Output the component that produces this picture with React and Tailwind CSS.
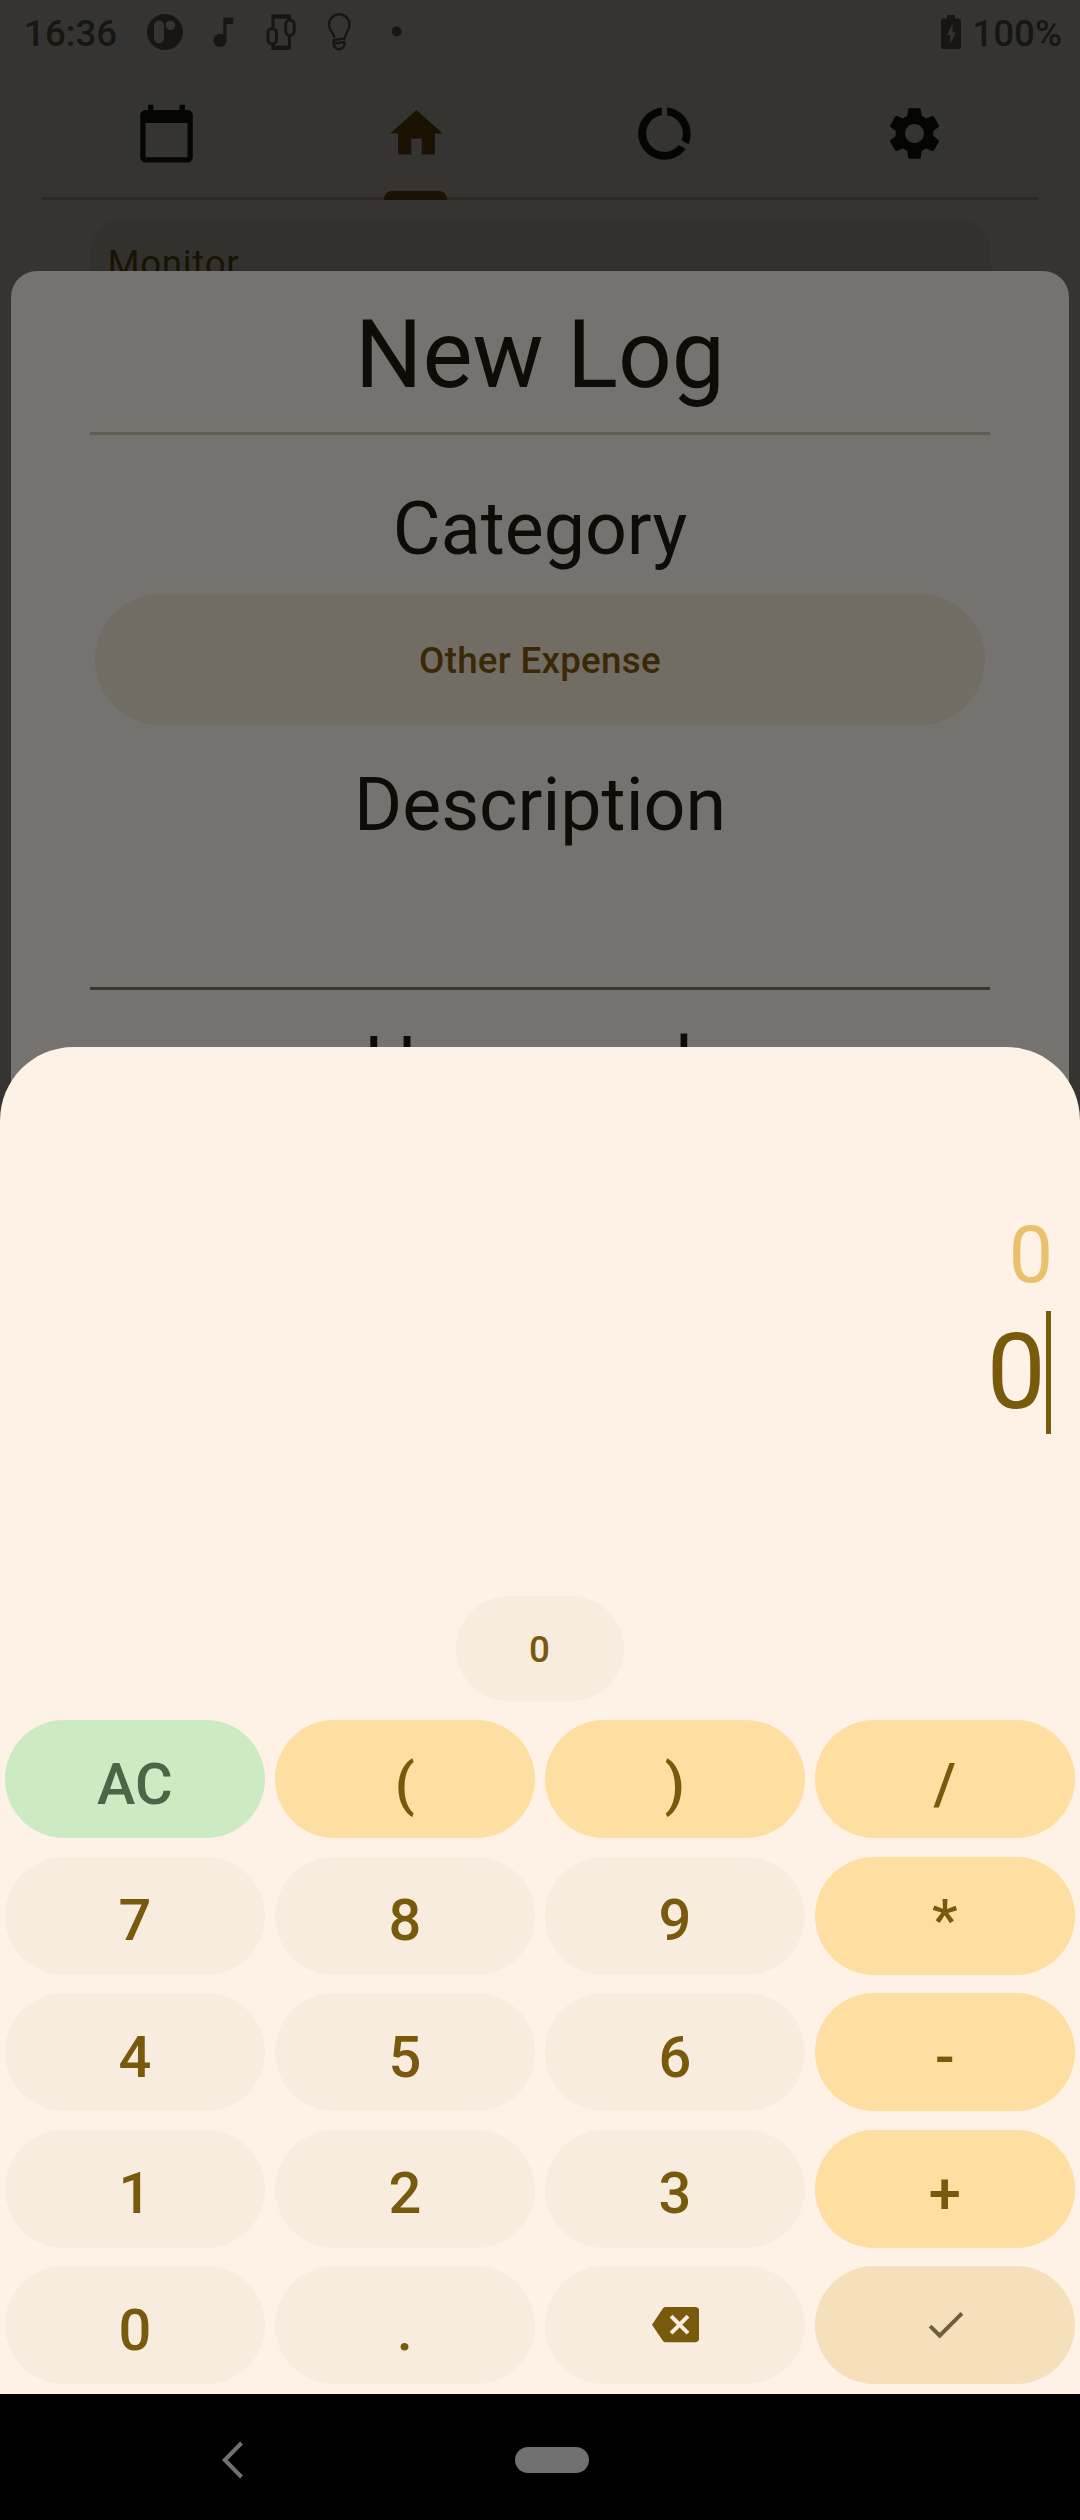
const ICONS = {
  calendar:
    "M20 3h-1V1h-2v2H7V1H5v2H4c-1.1 0-2 .9-2 2v16c0 1.1.9 2 2 2h16c1.1 0 2-.9 2-2V5c0-1.1-.9-2-2-2zm0 18H4V8h16v13z",
  home: "M10 20v-6h4v6h5v-8h3L12 3 2 12h3v8z",
  usage:
    "M13 2.05v3.03c3.39.49 6 3.39 6 6.92 0 .9-.18 1.75-.48 2.54l2.6 1.53c.56-1.24.88-2.62.88-4.07 0-5.18-3.95-9.45-9-9.95zM12 19c-3.87 0-7-3.13-7-7 0-3.53 2.61-6.43 6-6.92V2.05c-5.06.5-9 4.76-9 9.95 0 5.52 4.47 10 9.99 10 3.31 0 6.24-1.61 8.06-4.09l-2.6-1.53C16.17 17.98 14.21 19 12 19z",
  settings:
    "M19.14 12.94c.04-.3.06-.61.06-.94 0-.32-.02-.64-.07-.94l2.03-1.58c.18-.14.23-.41.12-.61l-1.92-3.32c-.12-.22-.37-.29-.59-.22l-2.39.96c-.5-.38-1.03-.7-1.62-.94l-.36-2.54c-.04-.24-.24-.41-.48-.41h-3.84c-.24 0-.43.17-.47.41l-.36 2.54c-.59.24-1.13.57-1.62.94l-2.39-.96c-.22-.08-.47 0-.59.22L2.74 8.87c-.12.21-.08.47.12.61l2.03 1.58c-.05.3-.09.63-.09.94s.02.64.07.94l-2.03 1.58c-.18.14-.23.41-.12.61l1.92 3.32c.12.22.37.29.59.22l2.39-.96c.5.38 1.03.7 1.62.94l.36 2.54c.05.24.24.41.48.41h3.84c.24 0 .44-.17.47-.41l.36-2.54c.59-.24 1.13-.56 1.62-.94l2.39.96c.22.08.47 0 .59-.22l1.92-3.32c.12-.22.07-.47-.12-.61l-2.01-1.58zM12 15.6c-1.98 0-3.6-1.62-3.6-3.6s1.62-3.6 3.6-3.6 3.6 1.62 3.6 3.6-1.62 3.6-3.6 3.6z",
  backspace:
    "M22 3H7c-.69 0-1.23.35-1.59.88L0 12l5.41 8.11c.36.53.9.89 1.59.89h15c1.1 0 2-.9 2-2V5c0-1.1-.9-2-2-2zm-3 12.59L17.59 17 14 13.41 10.41 17 9 15.59 12.59 12 9 8.41 10.41 7 14 10.59 17.59 7 19 8.41 15.41 12 19 15.59z",
  check: "M9 16.17L4.83 12l-1.42 1.41L9 19 21 7l-1.41-1.41z",
};

function Icon({ name, className }) {
  return (
    <svg viewBox="0 0 24 24" fill="currentColor" className={className}>
      <path d={ICONS[name]} />
    </svg>
  );
}

function StatusBar() {
  return (
    <div className="flex h-[66px] items-center pt-px pl-[24px] pr-[18px] text-[36.75px] font-medium text-[#171612]">
      <span className="w-[123px]">16:36</span>
      <svg viewBox="0 0 260 40" fill="none" className="-mt-1 h-10 w-[260px]">
        <path
          fill="currentColor"
          fillRule="evenodd"
          d="M18 2a18 18 0 1 0 0 36a18 18 0 0 0 0-36zM12 8.500a5 5 0 0 1 5 5v13a5 5 0 0 1-10 0v-13a5 5 0 0 1 5-5zM23.500 8.500a4.800 4.800 0 1 1 0 9.600a4.800 4.800 0 0 1 0-9.600z"
        />
        <path
          fill="currentColor"
          d="M76.300 5.500v17.200a6.600 6.600 0 1 0 3.300 5.700V12h6.600V5.500z"
        />
        <g stroke="currentColor" strokeWidth="3">
          <path d="M126 15V4.500h16.500V8M126 33V36h16.500V25" />
          <path strokeWidth="4.500" strokeLinecap="round" d="M126.500 4.500h15.500M126.500 35.700h15.500" />
          <rect x="121" y="16.500" width="8.500" height="15.500" rx="4.250" />
          <rect x="138.700" y="8" width="8.500" height="15.500" rx="4.250" />
        </g>
        <g stroke="currentColor" strokeWidth="2.400">
          <path d="M187.500 25.500c-.8-4.500-5.500-7-5.500-13a10 10 0 0 1 20.500 0c0 6-4 8.500-4.800 14l-11 1.500v3.500l11.500-1.500" />
          <path d="M186.700 31.500c0 8 11 8 11-1.500" />
        </g>
        <circle cx="249.700" cy="19.500" r="5" fill="currentColor" />
      </svg>
      <span className="grow" />
      <svg viewBox="0 0 20 34" className="-mt-1 mr-[11px] h-[34px] w-5">
        <path
          fill="currentColor"
          fillRule="evenodd"
          d="M6 0h8v3.500h4a2 2 0 0 1 2 2V32a2 2 0 0 1-2 2H2a2 2 0 0 1-2-2V5.500a2 2 0 0 1 2-2h4zM11.500 8.500L6 20h3.200v9L15 17.500h-3.500z"
        />
      </svg>
      <span>100%</span>
    </div>
  );
}

const TABS = [
  { name: "calendar", color: "text-[#050503]" },
  { name: "home", color: "text-[#1a1303]", active: true },
  { name: "usage", color: "text-[#050503]" },
  { name: "settings", color: "pl-px text-[#050503]" },
];

function TabBar() {
  return (
    <nav className="mx-[42px] grid h-[134px] grid-cols-4 border-b-3 border-[#2b2a27]">
      {TABS.map(({ name, color, active }) => (
        <div
          key={name}
          className={`-mb-[3px] flex flex-col items-center justify-between pt-[35.500px] ${color}`}
        >
          <Icon name={name} className={active ? "ml-px size-[63px]" : "size-[63px]"} />
          {active && <div className="h-[9px] w-[63px] rounded-t-[8px] bg-[#1a1303]" />}
        </div>
      ))}
    </nav>
  );
}

function Dialog() {
  return (
    <section className="absolute top-[271px] left-[11px] h-[900px] w-[1058px] rounded-t-[26px] bg-[#76726f] px-[79px] pt-[29px] text-center text-[73.500px] leading-[86px] text-[#0d0c07]">
      <h1 className="text-[94.500px] leading-[110px]">New Log</h1>
      <div className="mt-[22px] h-[3px] bg-[#635e53]" />
      <h2 className="mt-[51px]">Category</h2>
      <button className="mx-auto mt-[21.500px] flex h-[131.500px] w-[890px] items-center justify-center rounded-full bg-[#716c64] pt-[3px] text-[36.750px] font-medium tracking-[0.260px] text-[#3a2906]">
        Other Expense
      </button>
      <h2 className="mt-[37px]">Description</h2>
      <div className="mt-[139px] h-[3px] bg-[#3d382f]" />
      <h2 className="mt-[31px]">How much</h2>
    </section>
  );
}

const KEYS = [
  ["AC", "clear"], ["(", "op"], [")", "op"], ["/", "op"],
  ["7", "num"], ["8", "num"], ["9", "num"], ["*", "op"],
  ["4", "num"], ["5", "num"], ["6", "num"], ["-", "op"],
  ["1", "num"], ["2", "num"], ["3", "num"], ["+", "op"],
  ["0", "num"], [".", "num"], ["backspace", "num"], ["check", "done"],
];

const KEY_STYLES = {
  clear: "bg-[#cdebc3] text-[#4b6546]",
  op: "bg-[#ffdea1] text-[#79590b]",
  num: "bg-[#f8ecdf] text-[#79590b]",
  done: "bg-[#f6dfbb] text-[#6e5f40]",
};

function Key({ label, kind }) {
  const isIcon = label === "backspace" || label === "check";
  return (
    <button className={`flex h-[118px] items-center justify-center rounded-full ${KEY_STYLES[kind]}`}>
      {isIcon ? (
        <Icon name={label} className="ml-px size-[47.250px]" />
      ) : (
        <span className="pt-[9px] leading-[68px] tracking-[0.260px]">{label}</span>
      )}
    </button>
  );
}

function Calculator() {
  return (
    <section className="absolute top-[1047px] left-0 flex h-[1347px] w-[1080px] flex-col items-center rounded-t-[73.500px] bg-[#fef1e5] text-[#79590b]">
      <div className="flex h-[549px] w-full flex-col items-end pt-[162px] pr-[28px]">
        <div className="-mr-px text-[78.750px] leading-[92px] text-[#e9c16c]">0</div>
        <div className="mt-[10px] flex h-[123px] items-center pr-px text-[105px] leading-[123px]">
          <span>0</span>
          <span className="h-[123px] w-[5.250px] bg-[#79590b]" />
        </div>
      </div>
      <button className="flex h-[105px] w-[168px] items-center justify-center rounded-full bg-[#f8ecdf] pt-[2px] pr-px text-[36.750px] font-medium">
        0
      </button>
      <div className="mt-[19px] grid w-full grid-cols-4 gap-x-[10.500px] gap-y-[18.500px] px-[5.250px] text-[57.750px] font-medium">
        {KEYS.map(([label, kind]) => (
          <Key key={label} label={label} kind={kind} />
        ))}
      </div>
    </section>
  );
}

function NavigationBar() {
  return (
    <div className="absolute bottom-0 left-0 grid h-[126px] w-full grid-cols-[222px_1fr] items-center bg-black pt-[6px]">
      <span />
      <div className="flex items-center">
        <svg viewBox="0 0 22 38" className="h-[38px] w-[22px]" fill="none" stroke="#717171" strokeWidth="4">
          <path d="M19.500 2L2.800 19l16.700 17" />
        </svg>
        <div className="ml-[270.500px] h-[26.500px] w-[74.500px] rounded-[13px] bg-[#717171]" />
      </div>
    </div>
  );
}

export default function App() {
  return (
    <main className="relative h-[2520px] w-[1080px] overflow-hidden bg-[#363432] font-[Roboto,sans-serif]">
      <StatusBar />
      <TabBar />
      <div className="mx-[89.500px] mt-[19px] h-[500px] rounded-[34px] bg-[#33312d] pt-[23px] pl-[18px] text-[36.750px] leading-[44px] tracking-[0.650px] text-[#1a1303]">
        Monitor
      </div>
      <Dialog />
      <Calculator />
      <NavigationBar />
    </main>
  );
}
